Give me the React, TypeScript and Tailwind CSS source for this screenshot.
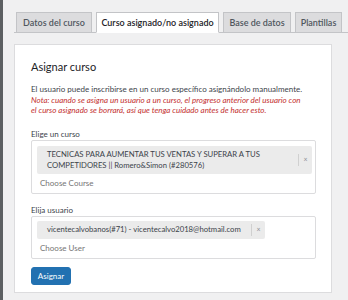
import React from "react";

const tabs = [
  { label: "Datos del curso", width: "w-[76px]", active: false },
  { label: "Curso asignado/no asignado", width: "w-[123px]", active: true },
  { label: "Base de datos", width: "w-[68px]", active: false },
  { label: "Plantillas", width: "w-[47px]", active: false },
];

function Chip({ text, wide }: { text: React.ReactNode; wide?: boolean }) {
  return (
    <div
      className={`flex items-center bg-[#ebebeb] rounded-[2px] ${
        wide ? "h-[28px] w-[275px]" : "h-[18px] w-[228px]"
      }`}
    >
      <div className="flex-1 pl-[10px] text-[7.7px] leading-[11px] text-[#3c434a] whitespace-nowrap">{text}</div>
      <div className="h-[12px] w-px bg-[#d0d0d0]" />
      <div className="w-[13px] text-center text-[7px] leading-none text-[#8c8f94]">×</div>
    </div>
  );
}

export default function App() {
  return (
    <div
      className="flex w-[348px] h-[300px] overflow-hidden bg-[#f0f0f1]"
      style={{ fontFamily: 'Lato, "Noto Sans", sans-serif' }}
    >
      <div className="w-[3px] shrink-0 bg-[#5c5f62]" />
      <div className="flex-1 pl-[11px]">
        {/* tabs */}
        <div className="mt-[12px] flex gap-[4px] pl-[2px] border-b border-[#c3c4c7]">
          {tabs.map((t) => (
            <div
              key={t.label}
              className={`${t.width} h-[21px] -mb-px flex items-center justify-center border text-[9px] font-semibold whitespace-nowrap ${
                t.active
                  ? "bg-white border-[#c3c4c7] text-[#1d2327] border-b-white"
                  : "bg-[#dcdcde] border-[#c3c4c7] text-[#50575e]"
              }`}
            >
              {t.label}
            </div>
          ))}
        </div>

        {/* panel */}
        <div className="mt-[11px] w-[318px] h-[249px] bg-white border border-[#dcdcde] pl-[16px] pt-[15px]">
          <h2 className="text-[11px] leading-[14px] text-[#1d2327]">Asignar curso</h2>
          <p className="mt-[10px] text-[8px] leading-[10.5px] text-[#3c434a] w-[290px]">
            El usuario puede inscribirse en un curso específico asignándolo manualmente.
            <br />
            <em className="text-[#c3302f]">
              Nota: cuando se asigna un usuario a un curso, el progreso anterior del usuario con
              <br />
              el curso asignado se borrará, así que tenga cuidado antes de hacer esto.
            </em>
          </p>

          <div className="mt-[13px] text-[8px] leading-[11px] text-[#3c434a]">Elige un curso</div>
          <div className="w-[285px] h-[54px] border border-[#dcdcde] rounded-[2px] pl-[5px] pt-[5px] bg-white">
            <Chip
              wide
              text={
                <>
                  TECNICAS PARA AUMENTAR TUS VENTAS Y SUPERAR A TUS
                  <br />
                  COMPETIDORES || Romero&amp;Simon (#280576)
                </>
              }
            />
            <div className="mt-[4px] pl-[3px] text-[8px] leading-[11px] text-[#757575]">Choose Course</div>
          </div>

          <div className="mt-[11px] text-[8px] leading-[11px] text-[#3c434a]">Elija usuario</div>
          <div className="w-[285px] h-[43px] border border-[#dcdcde] rounded-[2px] pl-[5px] pt-[4px] bg-white">
            <Chip text="vicentecalvobanos(#71) - vicentecalvo2018@hotmail.com" />
            <div className="mt-[4px] pl-[3px] text-[8px] leading-[11px] text-[#757575]">Choose User</div>
          </div>

          <button className="mt-[8px] w-[40px] h-[18px] rounded-[3px] bg-[#2271b1] border border-[#2271b1] text-white text-[8px] leading-none">
            Asignar
          </button>
        </div>
      </div>
    </div>
  );
}
